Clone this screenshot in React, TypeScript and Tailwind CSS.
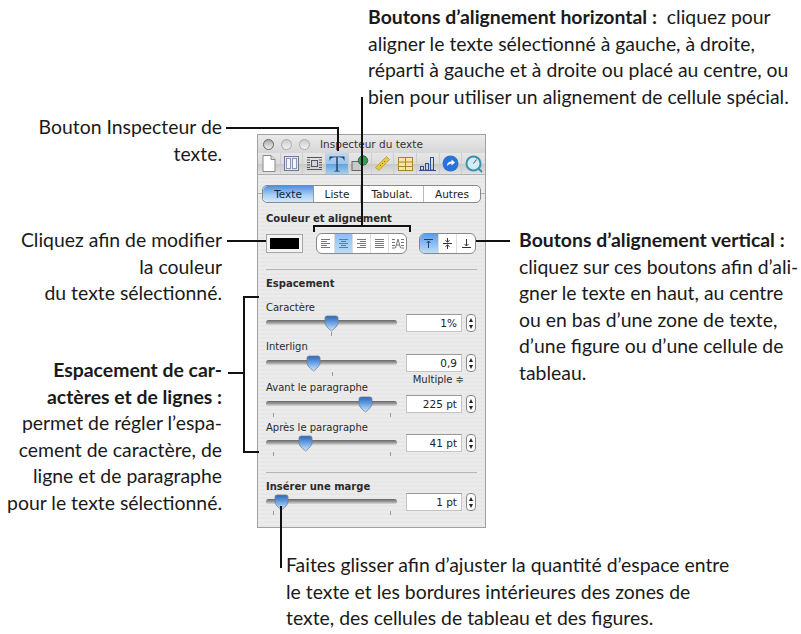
import React from "react";

const Body = "font-['Lato','Open_Sans',sans-serif] text-[19.4px] leading-[26.6px] text-[#1a1a1a] whitespace-nowrap";
const Lbl = "font-['DejaVu_Sans',sans-serif] text-[10px] leading-[12px] text-[#2a2a2a] whitespace-nowrap";

function Line({ c }: { c: string }) {
  return <div className={"absolute bg-[#111] z-10 " + c} />;
}

function Thumb() {
  return (
    <svg width="15" height="17" viewBox="0 0 15 17">
      <defs>
        <linearGradient id="th" x1="0" y1="0" x2="0" y2="1">
          <stop offset="0" stopColor="#2f66b4" />
          <stop offset="0.4" stopColor="#5f9ae0" />
          <stop offset="1" stopColor="#d5e8fa" />
        </linearGradient>
      </defs>
      <path d="M1 3 Q1 1 3 1 H12 Q14 1 14 3 V8 Q14 11 7.5 16 Q1 11 1 8 Z" fill="url(#th)" stroke="#6d7f99" strokeWidth="0.8" />
    </svg>
  );
}

function Slider({ pos, ticks }: { pos: number; ticks: number[] }) {
  return (
    <div className="relative w-[131px] h-[18px] shrink-0">
      <div className="absolute left-0 right-0 top-[6px] h-[5px] rounded-full bg-[linear-gradient(#666,#999_50%,#d8d8d8)]" />
      {ticks.map((t) => (
        <div key={t} className="absolute top-[18px] w-px h-[4px] bg-[#999]" style={{ left: t }} />
      ))}
      <div className="absolute top-[1px]" style={{ left: pos - 7 }}>
        <Thumb />
      </div>
    </div>
  );
}

function Stepper() {
  return (
    <div className="w-[10px] h-[18px] ml-[4px] rounded-[4px] border border-[#888] bg-white flex flex-col items-center justify-center gap-[3px] shrink-0">
      <svg width="4" height="4" viewBox="0 0 6 6"><path d="M3 0 L6 6 H0 Z" fill="#222" /></svg>
      <svg width="4" height="4" viewBox="0 0 6 6"><path d="M3 6 L6 0 H0 Z" fill="#222" /></svg>
    </div>
  );
}

function Row({ pos, ticks, value }: { pos: number; ticks: number[]; value: string }) {
  return (
    <div className="flex items-start">
      <Slider pos={pos} ticks={ticks} />
      <div className="ml-[9px] w-[56px] h-[18px] bg-white border border-[#c4c4c4] border-t-[#999] text-right pr-[4px] font-['DejaVu_Sans',sans-serif] text-[10.5px] leading-[16px] text-[#222]">{value}</div>
      <Stepper />
    </div>
  );
}

function AlignIcon({ kind }: { kind: number }) {
  const rows: [number, number][][] = [
    [[1, 10], [1, 7], [1, 10], [1, 7], [1, 10]],
    [[1, 10], [3, 8], [1, 10], [3, 8], [1, 10]],
    [[1, 10], [4, 10], [1, 10], [4, 10], [1, 10]],
    [[1, 10], [1, 10], [1, 10], [1, 10], [1, 10]],
  ];
  if (kind === 4) {
    return (
      <svg width="12" height="11" viewBox="0 0 12 11" stroke="#777" strokeWidth="1" fill="none">
        <path d="M0 1.5H3M0 4.5H3M0 7.5H3M0 10H3M9 1.5H12M9 4.5H12M9 7.5H12M9 10H12" />
        <path d="M3.5 10 L6 1 L8.5 10M4.5 7H7.5" />
      </svg>
    );
  }
  return (
    <svg width="11" height="11" viewBox="0 0 11 11" stroke="#777" strokeWidth="1">
      {rows[kind].map(([a, b], i) => (
        <line key={i} x1={a} x2={b} y1={1.5 + i * 2} y2={1.5 + i * 2} />
      ))}
    </svg>
  );
}

function VIcon({ kind }: { kind: number }) {
  const d = [
    "M1 1.5H10M5.5 3V10M3.5 5L5.5 3L7.5 5",
    "M1 5.5H10M5.5 0V4L3.5 2.5M5.5 4L7.5 2.5M5.5 11V7L3.5 8.5M5.5 7L7.5 8.5",
    "M1 9.5H10M5.5 1V8M3.5 6L5.5 8L7.5 6",
  ][kind];
  return (
    <svg width="11" height="11" viewBox="0 0 11 11" stroke={kind === 0 ? "#1b3d70" : "#333"} strokeWidth="1" fill="none">
      <path d={d} />
    </svg>
  );
}

function ToolIcon({ i }: { i: number }) {
  switch (i) {
    case 0:
      return (
        <svg width="14" height="17" viewBox="0 0 14 17">
          <path d="M1 .5H9L13 4.5V16.5H1Z" fill="#fff" stroke="#888" />
          <path d="M9 .5V4.5H13" fill="#ddd" stroke="#888" />
        </svg>
      );
    case 1:
      return (
        <svg width="15" height="15" viewBox="0 0 15 15">
          <rect x=".5" y=".5" width="14" height="14" fill="#dfe6f2" stroke="#6d7b99" />
          <rect x="2.5" y="2.5" width="4" height="10" fill="#f3f6fb" stroke="#8b97b0" />
          <rect x="8.5" y="2.5" width="4" height="10" fill="#f3f6fb" stroke="#8b97b0" />
        </svg>
      );
    case 2:
      return (
        <svg width="15" height="15" viewBox="0 0 15 15" stroke="#555" fill="none">
          <path d="M0 1.5H15M0 13.5H15M0 4H3M0 6.5H3M0 9H3M0 11.5H3M12 4H15M12 6.5H15M12 9H15M12 11.5H15" />
          <rect x="4.5" y="4.5" width="6" height="6" fill="#cdd5e3" stroke="#555" />
        </svg>
      );
    case 3:
      return (
        <svg width="20" height="18" viewBox="0 0 20 18">
          <path d="M2.5 1.5H17.5V5.5H17Q16.5 2.4 12 2.3H10.7V15.6L12.8 16V16.5H7.2V16L9.3 15.6V2.3H8Q3.5 2.4 3 5.5H2.5Z" fill="#1f3d66" />
        </svg>
      );
    case 4:
      return (
        <svg width="18" height="17" viewBox="0 0 18 17">
          <rect x="1" y="6.5" width="10" height="9" fill="#c9c9c9" stroke="#666" />
          <circle cx="12" cy="5.5" r="4.7" fill="#3f9a5a" stroke="#2c6b41" />
        </svg>
      );
    case 5:
      return (
        <svg width="17" height="17" viewBox="0 0 17 17">
          <path d="M12.5 1.5L15.5 4.5L5 15.5L1.5 12.5Z" fill="#e8c63f" stroke="#b89c35" strokeWidth=".8" />
          <path d="M10 6L11 7M8 8L9 9M6 10L7 11" stroke="#8a7420" />
        </svg>
      );
    case 6:
      return (
        <svg width="15" height="14" viewBox="0 0 15 14">
          <rect x=".5" y=".5" width="14" height="13" fill="#f6e6a0" stroke="#a8862a" />
          <path d="M.5 5H14.5M.5 9.5H14.5M7.5 .5V13.5" stroke="#a8862a" />
        </svg>
      );
    case 7:
      return (
        <svg width="17" height="14" viewBox="0 0 17 14" fill="none" stroke="#2c4f94">
          <path d="M0 13.5H17" />
          <rect x="1.5" y="9.5" width="3" height="3.5" />
          <rect x="6.5" y="6.5" width="3" height="6.5" />
          <rect x="11.5" y=".5" width="3" height="12.5" />
        </svg>
      );
    case 8:
      return (
        <svg width="17" height="17" viewBox="0 0 17 17">
          <circle cx="8.5" cy="8.5" r="8" fill="#2a73d8" />
          <path d="M5 11Q5 6.5 9.5 6.5V4.5L13 7.5L9.5 10.5V8.5Q7 8.5 5 11Z" fill="#fff" />
        </svg>
      );
    default:
      return (
        <svg width="18" height="18" viewBox="0 0 18 18" fill="none">
          <circle cx="8.5" cy="8.5" r="7" fill="#d4ebf3" stroke="#3a93ae" strokeWidth="2" />
          <path d="M8.5 8.5L11.5 4.5" stroke="#456" />
          <path d="M13 13L17 17" stroke="#3a93ae" strokeWidth="2" />
        </svg>
      );
  }
}

export default function App() {
  return (
    <div className="relative w-[801px] h-[634px] bg-white overflow-hidden">
      {/* callout lines */}
      <Line c="left-[226px] top-[127px] w-[113px] h-[2px]" />
      <Line c="left-[337px] top-[127px] w-[2px] h-[24px]" />
      <Line c="left-[361px] top-[97px] w-[2px] h-[129px]" />
      <Line c="left-[313px] top-[225px] w-[98px] h-[2px]" />
      <Line c="left-[313px] top-[225px] w-[2px] h-[7px]" />
      <Line c="left-[409px] top-[225px] w-[2px] h-[7px]" />
      <Line c="left-[227px] top-[240px] w-[39px] h-[2px]" />
      <Line c="left-[476px] top-[240px] w-[34px] h-[2px]" />
      <Line c="left-[243px] top-[296px] w-[16px] h-[2px]" />
      <Line c="left-[243px] top-[451px] w-[16px] h-[2px]" />
      <Line c="left-[243px] top-[296px] w-[2px] h-[157px]" />
      <Line c="left-[228px] top-[372px] w-[15px] h-[2px]" />
      <Line c="left-[280px] top-[506px] w-[2px] h-[62px]" />

      {/* captions */}
      <div className={"absolute left-[368px] top-[4px] " + Body}>
        <b className="font-bold">Boutons d’alignement horizontal :</b>&nbsp; cliquez pour<br />
        aligner le texte sélectionné à gauche, à droite,<br />
        réparti à gauche et à droite ou placé au centre, ou<br />
        bien pour utiliser un alignement de cellule spécial.
      </div>
      <div className={"absolute right-[579px] top-[114px] text-right " + Body}>
        Bouton Inspecteur de<br />texte.
      </div>
      <div className={"absolute right-[579px] top-[227px] text-right " + Body}>
        Cliquez afin de modifier<br />la couleur<br />du texte sélectionné.
      </div>
      <div className={"absolute right-[579px] top-[357px] text-right " + Body}>
        <b className="font-bold">Espacement de car-<br />actères et de lignes :</b><br />
        permet de régler l’espa-<br />cement de caractère, de<br />ligne et de paragraphe<br />pour le texte sélectionné.
      </div>
      <div className={"absolute left-[519px] top-[227px] " + Body}>
        <b className="font-bold">Boutons d’alignement vertical :</b><br />
        cliquez sur ces boutons afin d’ali-<br />gner le texte en haut, au centre<br />ou en bas d’une zone de texte,<br />d’une figure ou d’une cellule de<br />tableau.
      </div>
      <div className={"absolute left-[286px] top-[552px] " + Body}>
        Faites glisser afin d’ajuster la quantité d’espace entre<br />
        le texte et les bordures intérieures des zones de<br />
        texte, des cellules de tableau et des figures.
      </div>

      {/* inspector panel */}
      <div className="absolute left-[257px] top-[134px] w-[229px] h-[394px] border border-[#a0a0a0] flex flex-col bg-[repeating-linear-gradient(#ebebeb_0px,#ebebeb_2px,#e7e7e7_2px,#e7e7e7_4px)]">
        <div className="relative h-[18px] bg-[linear-gradient(#eaeaea,#d6d6d6)] flex items-center pl-[4px] gap-[6px] shrink-0">
          <div className="w-[11px] h-[11px] rounded-full border border-[#666] bg-[linear-gradient(#aaa,#eee)] ml-[1px]" />
          <div className="w-[11px] h-[11px] rounded-full border border-[#aaa] bg-[linear-gradient(#ccc,#f2f2f2)] ml-[1px]" />
          <div className="w-[11px] h-[11px] rounded-full border border-[#aaa] bg-[linear-gradient(#ccc,#f2f2f2)] ml-[1px]" />
          <span className="ml-[4px] font-['DejaVu_Sans',sans-serif] text-[10.5px] leading-none text-[#333]">Inspecteur du texte</span>
        </div>
        <div className="h-[22px] grid grid-cols-10 bg-[linear-gradient(#e6e6e6,#dcdcdc_50%,#c8c8c8_52%,#e2e2e2)] border-b border-[#b0b0b0] shrink-0">
          {[0, 1, 2, 3, 4, 5, 6, 7, 8, 9].map((i) => (
            <div
              key={i}
              className={
                "flex items-center justify-center border-r border-[#cdcdcd] last:border-r-0 " +
                (i === 3 ? "bg-[linear-gradient(#bcd9f3,#9cc6ec_50%,#5ea2dd_52%,#a7d0f0)]" : "")
              }
            >
              <ToolIcon i={i} />
            </div>
          ))}
        </div>

        <div className="relative mt-[10px] shrink-0 h-[18px] flex items-stretch">
          <div className="absolute left-0 right-0 top-[8px] h-px bg-[#b0b0b0]" />
          <div className="relative mx-[4px] flex-1 flex rounded-[5px] border border-[#888] bg-white font-['DejaVu_Sans',sans-serif] text-[10.5px] leading-[16px] text-[#222] text-center">
            <div className="w-[51px] rounded-l-[5px] bg-[linear-gradient(#4f8fdb,#a6cff3_55%,#d5e9fa)] border-r border-[#999] text-[#10243f]">Texte</div>
            <div className="w-[47px] border-r border-[#bbb]">Liste</div>
            <div className="w-[63px] border-r border-[#bbb]">Tabulat.</div>
            <div className="flex-1">Autres</div>
          </div>
        </div>

        <div className="px-[8px] flex flex-col">
          <div className={Lbl + " font-bold mt-[10px]"}>Couleur et alignement</div>
          <div className="flex items-center mt-[8px] h-[21px]">
            <div className="w-[37px] h-[19px] border border-[#a5a5a5] bg-[#f3f3f3] p-[3px] shrink-0">
              <div className="w-full h-full bg-black" />
            </div>
            <div className="ml-[13px] w-[91px] h-[21px] flex rounded-[6px] border border-[#888] bg-white overflow-hidden">
              {[0, 1, 2, 3, 4].map((k) => (
                <div key={k} className={"flex-1 flex items-center justify-center border-r border-[#ddd] last:border-r-0 " + (k === 1 ? "bg-[linear-gradient(#8cc0f0,#bcdcf8)]" : "")}>
                  <AlignIcon kind={k} />
                </div>
              ))}
            </div>
            <div className="ml-[12px] w-[57px] h-[21px] flex rounded-[6px] border border-[#888] bg-white overflow-hidden">
              {[0, 1, 2].map((k) => (
                <div key={k} className={"flex-1 flex items-center justify-center border-r border-[#ddd] last:border-r-0 " + (k === 0 ? "bg-[linear-gradient(#5c9de6,#bcdcf8)]" : "")}>
                  <VIcon kind={k} />
                </div>
              ))}
            </div>
          </div>
          <div className="h-px bg-[#b5b5b5] mt-[15px]" />
          <div className={Lbl + " font-bold mt-[8px]"}>Espacement</div>
          <div className={Lbl + " mt-[12px]"}>Caractère</div>
          <Row pos={65} ticks={[65]} value="1%" />
          <div className={Lbl + " mt-[9px]"}>Interlign</div>
          <div className="mt-px"><Row pos={47} ticks={[66]} value="0,9" /></div>
          <div className="flex items-start justify-between h-[20px] mt-[2px]">
            <div className={Lbl + " mt-[8px]"}>Avant le paragraphe</div>
            <div className={Lbl + " mr-[13px] text-[9.5px]"}>Multiple ≑</div>
          </div>
          <div className="mt-[1px]"><Row pos={99} ticks={[7, 124]} value="225 pt" /></div>
          <div className={Lbl + " mt-[9px]"}>Après le paragraphe</div>
          <Row pos={39} ticks={[7, 124]} value="41 pt" />
          <div className="h-px bg-[#b5b5b5] mt-[20px]" />
          <div className={Lbl + " font-bold mt-[8px]"}>Insérer une marge</div>
          <Row pos={15} ticks={[7, 124]} value="1 pt" />
        </div>
      </div>
    </div>
  );
}
